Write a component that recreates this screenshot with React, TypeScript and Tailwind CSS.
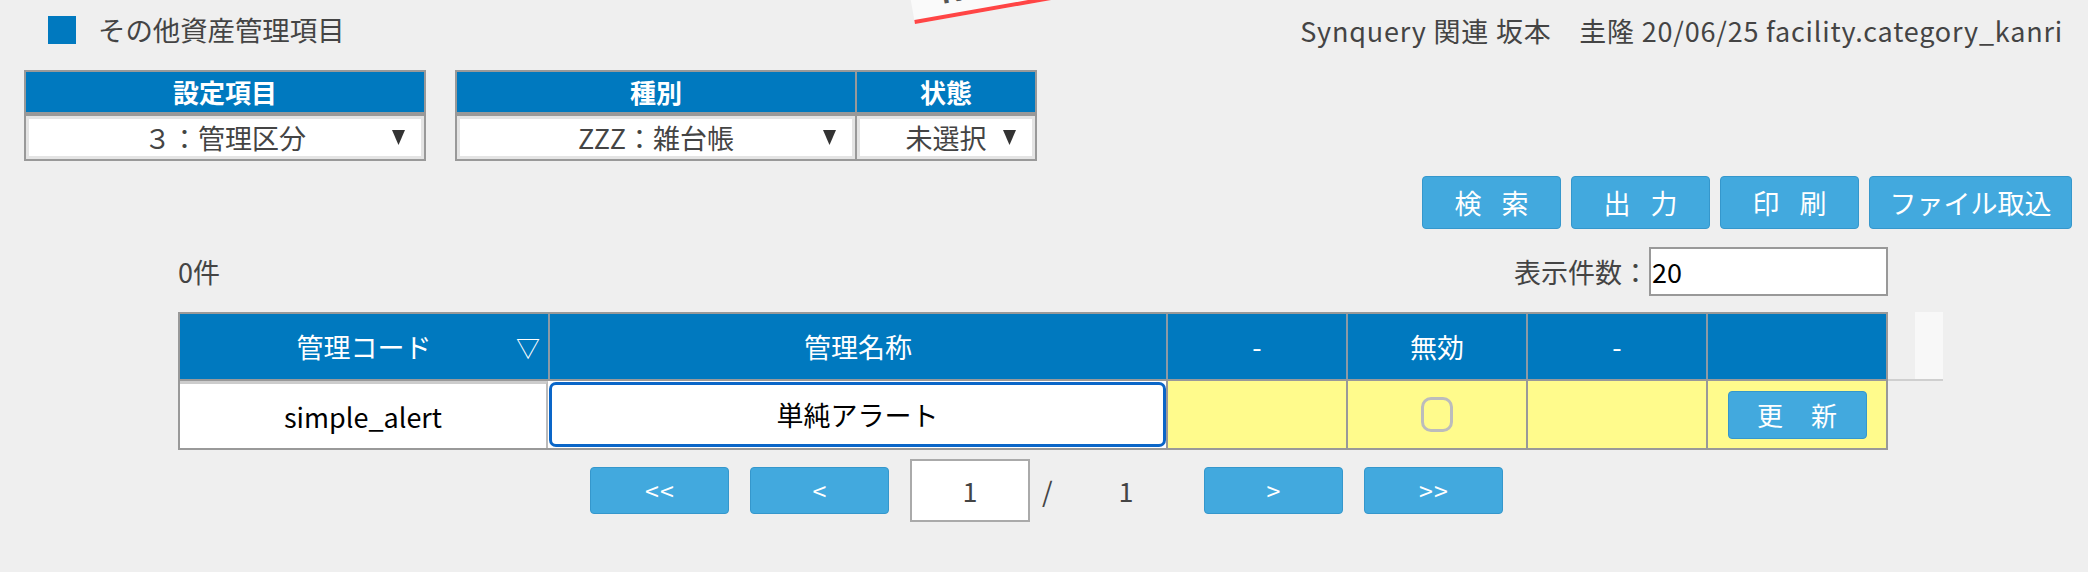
import type { ReactNode } from 'react';

const BLUE = 'bg-[#0079bf]';

function Caret() {
  return (
    <svg width="13" height="15" viewBox="0 0 13 15" className="absolute right-[16px]">
      <polygon points="0,0 13,0 6.5,15" fill="#333" />
    </svg>
  );
}

function FilterSelect({ value }: { value: string }) {
  return (
    <div className="bg-[#e4e4e4] p-[3px] h-[43px]">
      <div className="relative h-full bg-white flex items-center justify-center text-[27px] text-[#444] leading-none">
        <span>{value}</span>
        <Caret />
      </div>
    </div>
  );
}

function FilterHead({ children }: { children: ReactNode }) {
  return (
    <div className={`${BLUE} h-[40px] flex items-center justify-center text-white font-bold text-[26px] leading-none`}>
      {children}
    </div>
  );
}

function BlueButton({
  chars, className = '', gap = 'gap-[20px]',
}: {
  chars: string[];
  className?: string;
  gap?: string;
}) {
  return (
    <button
      className={`bg-[#42a9de] border border-[#3597cc] rounded-[4px] text-white flex items-center justify-center leading-none ${gap} ${className}`}
    >
      {chars.map((c, i) => (
        <span key={i}>{c}</span>
      ))}
    </button>
  );
}

function PageButton({ marks }: { marks: string[] }) {
  return (
    <button className="w-[139px] h-[47px] bg-[#42a9de] border border-[#3597cc] rounded-[4px] text-white text-[25px] leading-none flex items-center justify-center gap-[1px]">
      {marks.map((m, i) => (
        <span key={i}>{m}</span>
      ))}
    </button>
  );
}

export default function App() {
  return (
    <div className="relative w-full min-h-[572px] overflow-hidden bg-[#efefef] text-[#444] font-['Noto_Sans_CJK_JP','Noto_Sans',sans-serif]">
      {/* environment stamp, mostly off screen */}
      <div className="absolute left-[915px] top-[-46px] w-[160px] h-[70px] origin-bottom-left -rotate-[10deg] bg-[#fafafa] border-b-[4px] border-[#ff4545] pl-[30px] pb-[13px] flex items-end">
        <span className="text-[30px] font-bold text-[#555] leading-[22px]">NEW</span>
      </div>

      {/* title bar */}
      <div className="flex items-center justify-between pl-[48px] pr-[25px] pt-[16px] h-[44px]">
        <div className="flex items-center gap-[22px]">
          <span className={`w-[28px] h-[28px] ${BLUE}`} />
          <h1 className="text-[27.4px] leading-none text-[#444]">その他資産管理項目</h1>
        </div>
        <div className="text-[27px] tracking-[0.8px] leading-none whitespace-pre text-[#444]">
          Synquery 関連 坂本　圭隆 20/06/25 facility.category_kanri
        </div>
      </div>

      {/* filters */}
      <div className="flex gap-[29px] pl-[24px] mt-[26px]">
        <div className="w-[402px] border-2 border-[#999] bg-[#999] flex flex-col gap-[4px]">
          <FilterHead>設定項目</FilterHead>
          <FilterSelect value="３：管理区分" />
        </div>
        <div className="w-[582px] border-2 border-[#999] bg-[#999] flex gap-[2px]">
          <div className="w-[398px] flex flex-col gap-[4px]">
            <FilterHead>種別</FilterHead>
            <FilterSelect value="ZZZ：雑台帳" />
          </div>
          <div className="flex-1 flex flex-col gap-[4px]">
            <FilterHead>状態</FilterHead>
            <FilterSelect value="未選択" />
          </div>
        </div>
      </div>

      {/* action buttons */}
      <div className="flex justify-end gap-[10px] pr-[16px] mt-[15px]">
        <BlueButton chars={['検', '索']} className="w-[139px] h-[53px] text-[27px]" />
        <BlueButton chars={['出', '力']} className="w-[139px] h-[53px] text-[27px]" />
        <BlueButton chars={['印', '刷']} className="w-[139px] h-[53px] text-[27px]" />
        <BlueButton chars={['ファイル取込']} className="w-[203px] h-[53px] text-[27px]" />
      </div>

      {/* count + page size */}
      <div className="ml-[178px] w-[1710px] mt-[18px] flex items-center justify-between">
        <span className="text-[27px] leading-none">0件</span>
        <div className="flex items-center">
          <span className="text-[27px] leading-none">表示件数：</span>
          <div className="w-[239px] h-[49px] border-2 border-[#999] bg-white flex items-center pl-[1px] text-[27px] text-black leading-none">
            20
          </div>
        </div>
      </div>

      {/* list */}
      <div className="ml-[178px] mt-[16px]">
        <div className="flex">
          <div className={`w-[1710px] h-[69px] border-2 border-[#999] ${BLUE} flex text-white text-[27px] leading-none`}>
            <div className="relative w-[368px] flex items-center justify-center">
              管理コード
              <span className="absolute right-[8px] text-[24px]">▽</span>
            </div>
            <div className="w-[618px] border-l-2 border-[#8b9aa6] flex items-center justify-center">管理名称</div>
            <div className="w-[180px] border-l-2 border-[#8b9aa6] flex items-center justify-center">-</div>
            <div className="w-[180px] border-l-2 border-[#8b9aa6] flex items-center justify-center">無効</div>
            <div className="w-[180px] border-l-2 border-[#8b9aa6] flex items-center justify-center">-</div>
            <div className="w-[180px] border-l-2 border-[#8b9aa6]" />
          </div>
          <div className="w-[55px] h-[69px] border-b-2 border-[#cfcfcf] flex">
            <div className="w-[27px]" />
            <div className="w-[28px] bg-[#f8f8f8]" />
          </div>
        </div>

        <div className="w-[1710px] h-[69px] border-x-2 border-b-2 border-[#999] flex text-[27px] leading-none text-black">
          <div className="w-[368px] bg-white border-t-[3px] border-[#ccc] border-r-2 border-r-[#bbb] flex items-center justify-center">
            simple_alert
          </div>
          <div className="w-[618px] bg-white py-[1px] pl-[1px]">
            <div className="h-full border-[3px] border-[#0a66c8] rounded-[7px] bg-white flex items-center justify-center">
              単純アラート
            </div>
          </div>
          <div className="w-[180px] bg-[#fffb8c] border-l-2 border-[#999]" />
          <div className="w-[180px] bg-[#fffb8c] border-l-2 border-[#999] flex items-center justify-center">
            <span className="w-[32px] h-[35px] rounded-[10px] border-[3px] border-[#bcbcbc]" />
          </div>
          <div className="w-[180px] bg-[#fffb8c] border-l-2 border-[#999]" />
          <div className="w-[180px] bg-[#fffb8c] border-l-2 border-[#999] flex items-center justify-center">
            <BlueButton chars={['更', '新']} gap="gap-[28px]" className="w-[139px] h-[48px] text-[26px]" />
          </div>
        </div>
      </div>

      {/* pagination */}
      <div className="ml-[590px] mt-[9px] flex items-center">
        <PageButton marks={['<', '<']} />
        <div className="w-[21px]" />
        <PageButton marks={['<']} />
        <div className="w-[21px]" />
        <div className="w-[120px] h-[63px] border-2 border-[#aaa] bg-white flex items-center justify-center text-[27px] leading-none">
          1
        </div>
        <div className="w-[174px] flex items-center pl-[12px] gap-[66px] text-[27px] leading-none">
          <span>/</span>
          <span>1</span>
        </div>
        <PageButton marks={['>']} />
        <div className="w-[21px]" />
        <PageButton marks={['>', '>']} />
      </div>
    </div>
  );
}
